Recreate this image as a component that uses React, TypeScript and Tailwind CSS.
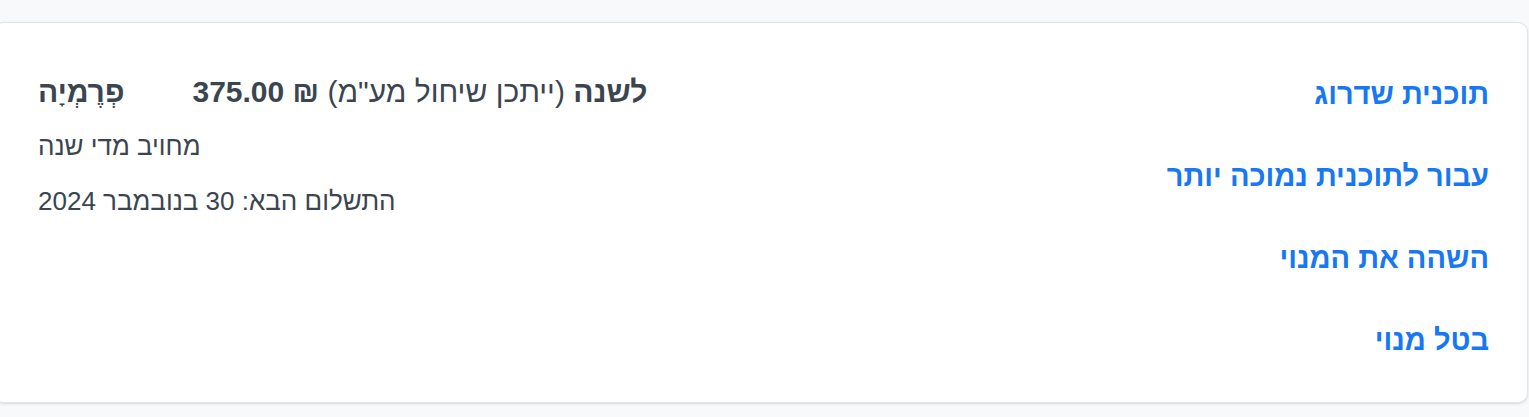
import React from 'react';

const links = ['תוכנית שדרוג', 'עבור לתוכנית נמוכה יותר', 'השהה את המנוי', 'בטל מנוי'];

export default function App() {
  return (
    <div className="min-h-screen bg-[#f8f9fb] pt-[22px] font-['Liberation_Sans',Arial,sans-serif]">
      <div className="-ml-[7px] mr-[1px] h-[381px] bg-white border border-[#e1e5ea] rounded-[10px] shadow-sm">
        <div className="flex justify-between pl-[44px] pr-[38px]">
          <div className="pt-[50px] text-[#3a4550]">
            <div className="flex items-center gap-[68px] text-[30px] h-[36px]">
              <span className="font-bold" dir="rtl">פְרֶמְיָה</span>
              <span dir="rtl"><b>לשנה</b> (ייתכן שיחול מע"מ) <b>₪ 375.00</b></span>
            </div>
            <div className="mt-[19px] text-[26px] h-[36px] flex items-center">
              <span dir="rtl">מחויב מדי שנה</span>
            </div>
            <div className="mt-[19px] text-[26px] h-[36px] flex items-center">
              <span dir="rtl">התשלום הבא: 30 בנובמבר 2024</span>
            </div>
          </div>
          <div className="pt-[54px] flex flex-col items-start gap-[46px]" dir="rtl">
            {links.map(l => (
              <a key={l} href="#" className="text-[29px] font-bold text-[#1877f2] h-[36px] flex items-center">{l}</a>
            ))}
          </div>
        </div>
      </div>
    </div>
  );
}
